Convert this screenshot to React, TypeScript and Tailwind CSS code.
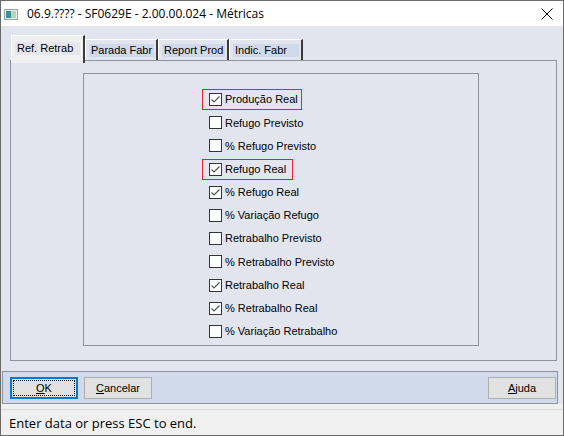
import React from 'react';

const ITEMS = [
  { label: 'Produção Real', checked: true, mark: 'w-[100px]' },
  { label: 'Refugo Previsto', checked: false },
  { label: '% Refugo Previsto', checked: false },
  { label: 'Refugo Real', checked: true, mark: 'w-[91px]' },
  { label: '% Refugo Real', checked: true },
  { label: '% Variação Refugo', checked: false },
  { label: 'Retrabalho Previsto', checked: false },
  { label: '% Retrabalho Previsto', checked: false },
  { label: 'Retrabalho Real', checked: true },
  { label: '% Retrabalho Real', checked: true },
  { label: '% Variação Retrabalho', checked: false },
];

const TABS = [
  { label: 'Parada Fabr', w: 'w-[73px]' },
  { label: 'Report Prod', w: 'w-[71px]' },
  { label: 'Indic. Fabr', w: 'w-[74px]' },
];

const CheckBox: React.FC<{ checked: boolean }> = ({ checked }) => (
  <div className="w-[13px] h-[13px] border border-[#333333] bg-white shrink-0">
    {checked && (
      <svg width="11" height="11" viewBox="0 0 11 11">
        <path d="M1.5 5.5 L4 8 L9.5 2.5" fill="none" stroke="#555" strokeWidth="1.2" />
      </svg>
    )}
  </div>
);

const Button: React.FC<{ children: React.ReactNode; focused?: boolean }> = ({ children, focused }) => (
  <div
    className={
      focused
        ? 'w-[68px] h-[22px] border-2 border-[#0078d7] bg-[#e1e1e1] p-[1px]'
        : 'w-[68px] h-[22px] border border-[#adadad] bg-[#e1e1e1] p-[2px]'
    }
  >
    <div
      className={
        focused
          ? 'h-full border border-dotted border-black flex items-center justify-center'
          : 'h-full flex items-center justify-center'
      }
    >
      {children}
    </div>
  </div>
);

export default function App() {
  return (
    <div className="w-[564px] h-[436px] border border-[#6b6b6b] bg-white flex flex-col font-['Liberation_Sans',Arial,sans-serif] text-[11px] text-black overflow-hidden">
      {/* title bar */}
      <div className="h-[25px] bg-white flex items-center relative shrink-0">
        <svg width="14" height="11" viewBox="0 0 14 11" className="ml-[3px] mt-[2px]">
          <rect x="0.5" y="0.5" width="13" height="10" fill="#e8eef0" stroke="#9aa4aa" />
          <rect x="2" y="2" width="5" height="7" fill="#3f8f95" />
          <rect x="7" y="2" width="5" height="7" fill="#b6d7b0" />
        </svg>
        <span className="ml-[9px] text-[12px] font-['Open_Sans',sans-serif] text-black">
          06.9.???? - SF0629E - 2.00.00.024 - Métricas
        </span>
        <svg width="12" height="12" viewBox="0 0 12 12" className="absolute right-[10px] top-[7px]">
          <path d="M0.5 0.5 L11.5 11.5 M11.5 0.5 L0.5 11.5" stroke="#000" strokeWidth="1" />
        </svg>
      </div>

      {/* main */}
      <div className="h-[378px] bg-[#e2e5ee] flex flex-col shrink-0">
        <div className="mt-[9px] pl-[10px] h-[25px] flex items-end relative z-10">
          <div className="w-[74px] h-[28px] mb-[-3px] bg-[#f0f0f0] border-t border-l border-white border-r-2 border-r-[#3a3a3a] pt-[6px] pl-[3px] pr-[3px]">
            <div className="h-[13px] leading-[13px] bg-[#e6e7ec] pl-[2px]">Ref. Retrab</div>
          </div>
          {TABS.map((t) => (
            <div
              key={t.label}
              className={`${t.w} h-[21px] border-t border-l border-white border-r-2 border-r-[#3a3a3a] pt-[4px] pl-[3px] pr-[2px]`}
            >
              <div className="h-[13px] leading-[13px] bg-[#d0d9ea] pl-[2px]">{t.label}</div>
            </div>
          ))}
        </div>

        <div className="ml-[9px] w-[547px] h-[301px] border border-[#8c939e]">
          <div className="ml-[72px] mt-[12px] w-[396px] h-[273px] border border-[#8c939e] pt-[14px] pl-[118px]">
            {ITEMS.map((it) => (
              <div key={it.label} className="h-[23.2px] flex items-center">
                <div
                  className={`${it.mark ?? ''} h-[21px] border ${
                    it.mark ? 'border-[#e8212e]' : 'border-transparent'
                  } pl-[6px] flex items-center gap-[3px]`}
                >
                  <CheckBox checked={it.checked} />
                  <span className="whitespace-nowrap">{it.label}</span>
                </div>
              </div>
            ))}
          </div>
        </div>

        <div className="mt-[10px] ml-[1px] w-[556px] h-[33px] border border-[#8c939e] bg-[#d1daeb] flex items-start pt-[5px] pl-[7px] pr-[1px] gap-[6px]">
          <Button focused>
            <span>
              <span className="underline">O</span>K
            </span>
          </Button>
          <Button>
            <span>
              <span className="underline">C</span>ancelar
            </span>
          </Button>
          <div className="flex-1" />
          <Button>
            <span>
              <span className="underline">A</span>juda
            </span>
          </Button>
        </div>
      </div>

      {/* status bar */}
      <div className="flex-1 bg-[#f0f0f0] pt-[5px]">
        <div className="h-full border-t border-[#dadada] pl-[8px] pt-[4px] text-[13px] font-['Open_Sans',sans-serif] leading-[18px]">
          Enter data or press ESC to end.
        </div>
      </div>
    </div>
  );
}
